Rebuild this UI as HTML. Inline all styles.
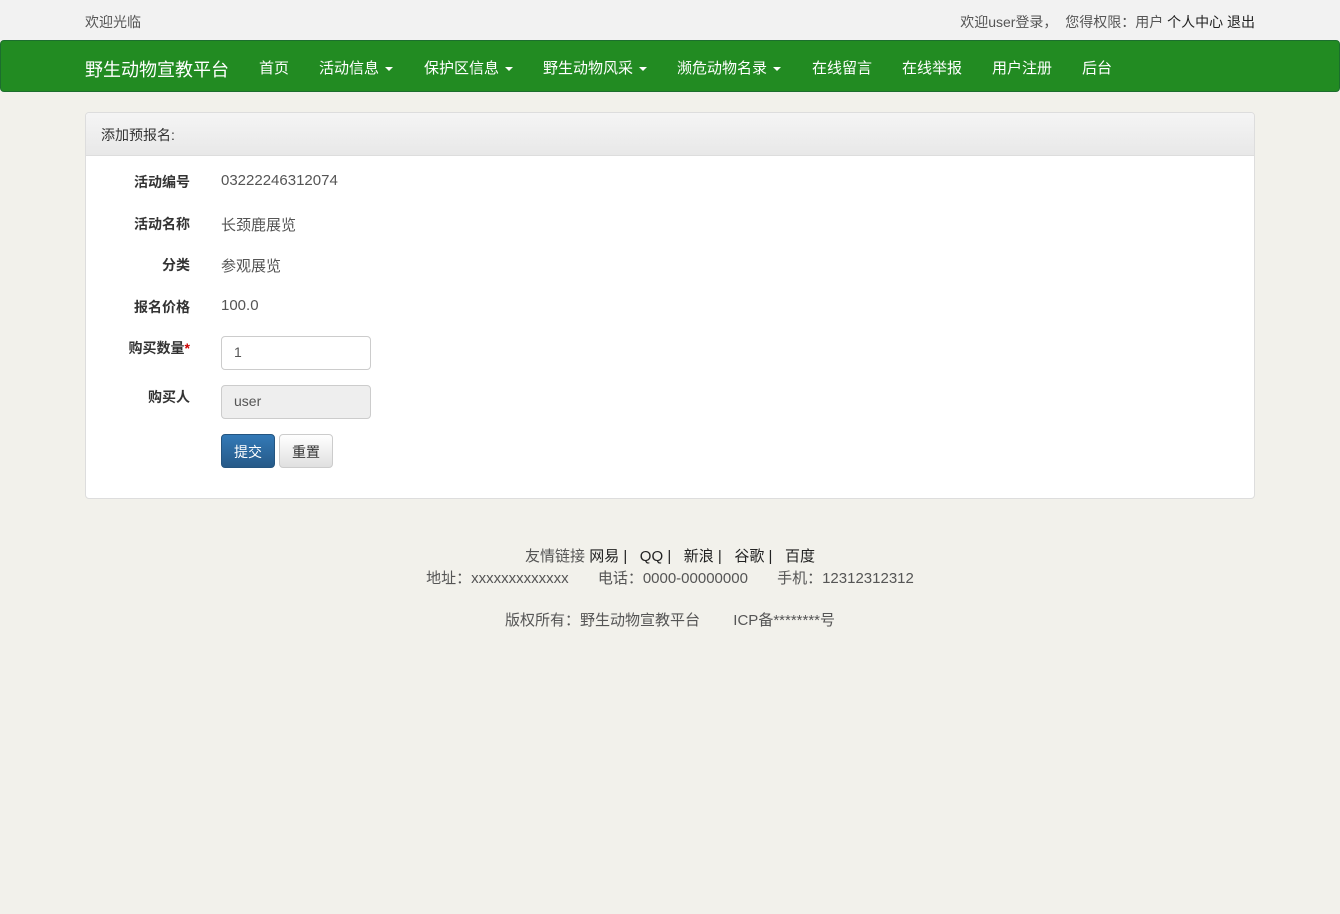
<!DOCTYPE html>
<html><head><meta charset="utf-8"><style>
*{box-sizing:border-box;margin:0;padding:0}
body{width:1340px;height:914px;background:#f2f1eb;font-family:"Liberation Sans","Noto Sans CJK SC",sans-serif;font-size:14px;color:#555;position:relative;overflow:hidden}
.abs{position:absolute;white-space:nowrap}
.top{position:absolute;left:0;top:0;width:1340px;height:40px;background:#f2f2f2}
.nav{position:absolute;left:0;top:40px;width:1340px;height:52px;background:#228b22;border:1px solid #1c6e2e;border-radius:4px}
.nav span{position:absolute;top:16px;color:#fff;font-size:15px;white-space:nowrap}
.caret{display:inline-block;width:0;height:0;border-left:4px solid transparent;border-right:4px solid transparent;border-top:4px solid #fff;vertical-align:middle;margin-left:6px}
.panel{position:absolute;left:85px;top:112px;width:1170px;height:387px;background:#fff;border:1px solid #ddd;border-radius:4px;overflow:hidden}
.ph{height:43px;background:linear-gradient(#f5f5f5,#e8e8e8);border-bottom:1px solid #ddd;padding:12px 15px;color:#333}
.lbl{position:absolute;font-weight:bold;color:#333;text-align:right;width:120px;left:70px;white-space:nowrap}
.val{position:absolute;left:221px;color:#555;white-space:nowrap}
.inp{position:absolute;left:221px;width:150px;height:34px;border:1px solid #ccc;border-radius:4px;padding:7px 12px;color:#555}
.btn{position:absolute;top:434px;height:34px;border-radius:4px;padding:7px 12px;white-space:nowrap}
.ft{position:absolute;left:0;width:1340px;text-align:center;white-space:pre;font-size:15px}
.ft b{font-weight:normal;color:#222}
</style></head><body>
<div class="top"></div>
<div class="abs" style="left:85px;top:12px">欢迎光临</div>
<div class="abs" style="right:85px;top:12px">欢迎user登录，&nbsp;&nbsp;您得权限：用户 <span style="color:#222">个人中心</span> <span style="color:#222">退出</span></div>
<div class="nav">
<span style="left:84px;top:15px;font-size:18px">野生动物宣教平台</span>
<span style="left:258px">首页</span>
<span style="left:318px">活动信息<i class="caret"></i></span>
<span style="left:423px">保护区信息<i class="caret"></i></span>
<span style="left:542px">野生动物风采<i class="caret"></i></span>
<span style="left:676px">濒危动物名录<i class="caret"></i></span>
<span style="left:811px">在线留言</span>
<span style="left:901px">在线举报</span>
<span style="left:991px">用户注册</span>
<span style="left:1081px">后台</span>
</div>
<div class="panel"><div class="ph">添加预报名:</div></div>
<div class="lbl" style="top:172px">活动编号</div><div class="val" style="top:172px;font-size:15px">03222246312074</div>
<div class="lbl" style="top:214px">活动名称</div><div class="val" style="top:214px;font-size:15px">长颈鹿展览</div>
<div class="lbl" style="top:255px">分类</div><div class="val" style="top:255px;font-size:15px">参观展览</div>
<div class="lbl" style="top:297px">报名价格</div><div class="val" style="top:297px;font-size:15px">100.0</div>
<div class="lbl" style="top:338px">购买数量<span style="color:#c00">*</span></div>
<div class="inp" style="top:336px;background:#fff">1</div>
<div class="lbl" style="top:387px">购买人</div>
<div class="inp" style="top:385px;background:#eee">user</div>
<div class="btn" style="left:221px;width:54px;background:linear-gradient(#337ab7,#265a88);border:1px solid #245580;color:#fff">提交</div>
<div class="btn" style="left:279px;width:54px;background:linear-gradient(#fff,#e0e0e0);border:1px solid #ccc;color:#333">重置</div>
<div class="ft" style="top:545px">友情链接 <b>网易</b> <b>|</b>   <b>QQ</b> <b>|</b>   <b>新浪</b> <b>|</b>   <b>谷歌</b> <b>|</b>   <b>百度</b></div>
<div class="ft" style="top:567px">地址：xxxxxxxxxxxxx       电话：0000-00000000       手机：12312312312</div>
<div class="ft" style="top:609px">版权所有：野生动物宣教平台        ICP备********号</div>
</body></html>
